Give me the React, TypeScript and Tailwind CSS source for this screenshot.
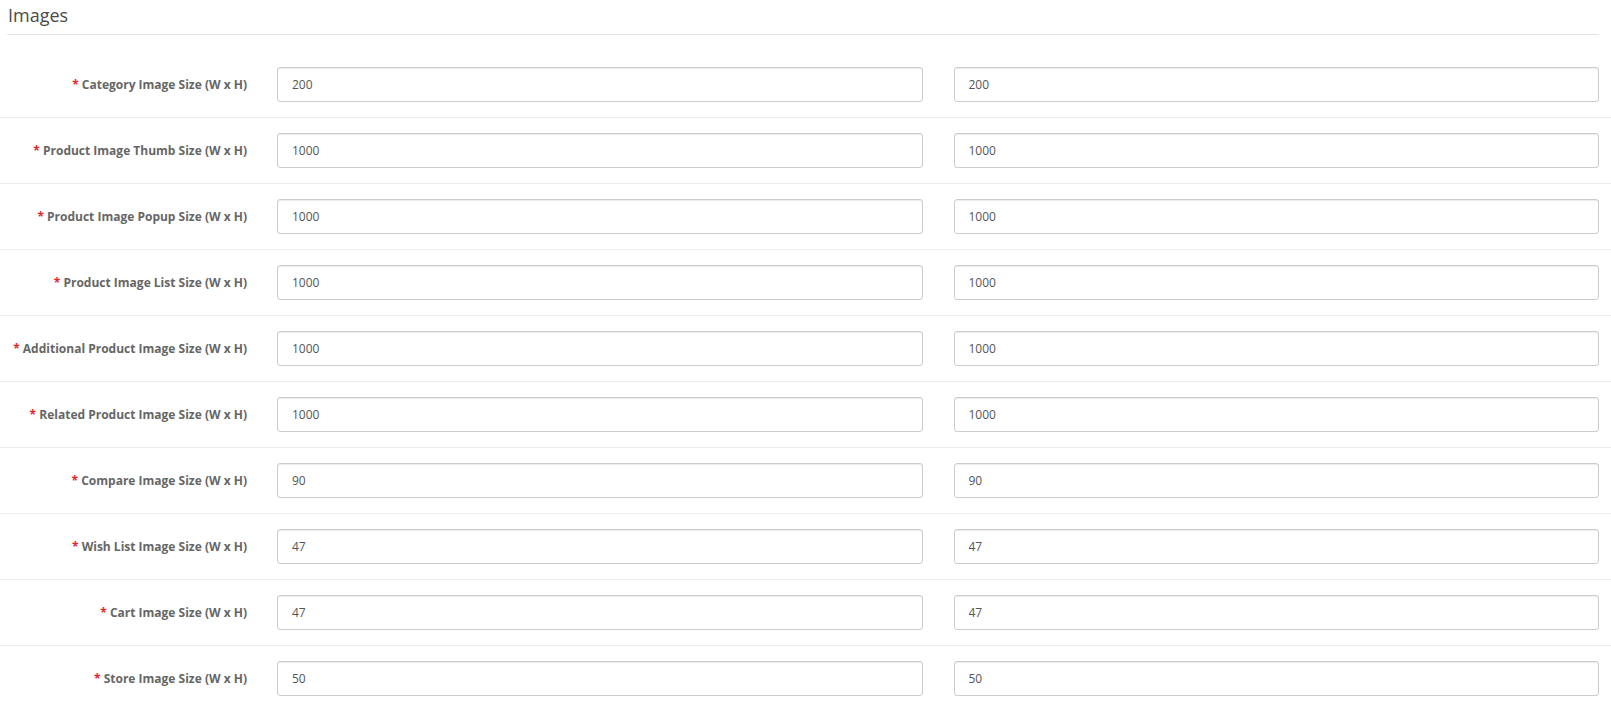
import React from 'react';

interface SizeRow {
    label: string;
    width: string;
    height: string;
}

const rows: SizeRow[] = [
    { label: 'Category Image Size (W x H)', width: '200', height: '200' },
    { label: 'Product Image Thumb Size (W x H)', width: '1000', height: '1000' },
    { label: 'Product Image Popup Size (W x H)', width: '1000', height: '1000' },
    { label: 'Product Image List Size (W x H)', width: '1000', height: '1000' },
    { label: 'Additional Product Image Size (W x H)', width: '1000', height: '1000' },
    { label: 'Related Product Image Size (W x H)', width: '1000', height: '1000' },
    { label: 'Compare Image Size (W x H)', width: '90', height: '90' },
    { label: 'Wish List Image Size (W x H)', width: '47', height: '47' },
    { label: 'Cart Image Size (W x H)', width: '47', height: '47' },
    { label: 'Store Image Size (W x H)', width: '50', height: '50' },
];

const SizeInput: React.FC<{ value: string }> = ({ value }) => (
    <input
        type="text"
        defaultValue={value}
        className="w-full h-[35px] pl-[14px] pr-[12px] text-[12px] text-[#555] bg-white border border-[#ccc] rounded-[3px] shadow-[inset_0_1px_1px_rgba(0,0,0,0.075)] outline-none"
    />
);

export default function App() {
    return (
        <div className="min-h-screen bg-white font-['Open_Sans',sans-serif]">
            {/* Legend */}
            <div className="mx-[7px] w-[1592px] h-[35px] pt-[2px] pl-[1px] border-b border-[#e5e5e5] text-[18px] leading-[27px] text-[#4a4a4a]">
                Images
            </div>

            {/* Rows */}
            <div className="mt-[17px]">
                {rows.map((row, i) => (
                    <div
                        key={row.label}
                        className={`flex items-center py-[15px] ${i > 0 ? 'border-t border-[#ededed]' : ''}`}
                    >
                        <label className="w-[247px] shrink-0 text-right text-[12px] font-bold text-[#666]">
                            <span className="text-[#e3262b]">* </span>
                            {row.label}
                        </label>
                        <div className="ml-[30px] mr-[12px] flex-1 grid grid-cols-2 gap-x-[31px]">
                            <SizeInput value={row.width} />
                            <SizeInput value={row.height} />
                        </div>
                    </div>
                ))}
            </div>
        </div>
    );
}
